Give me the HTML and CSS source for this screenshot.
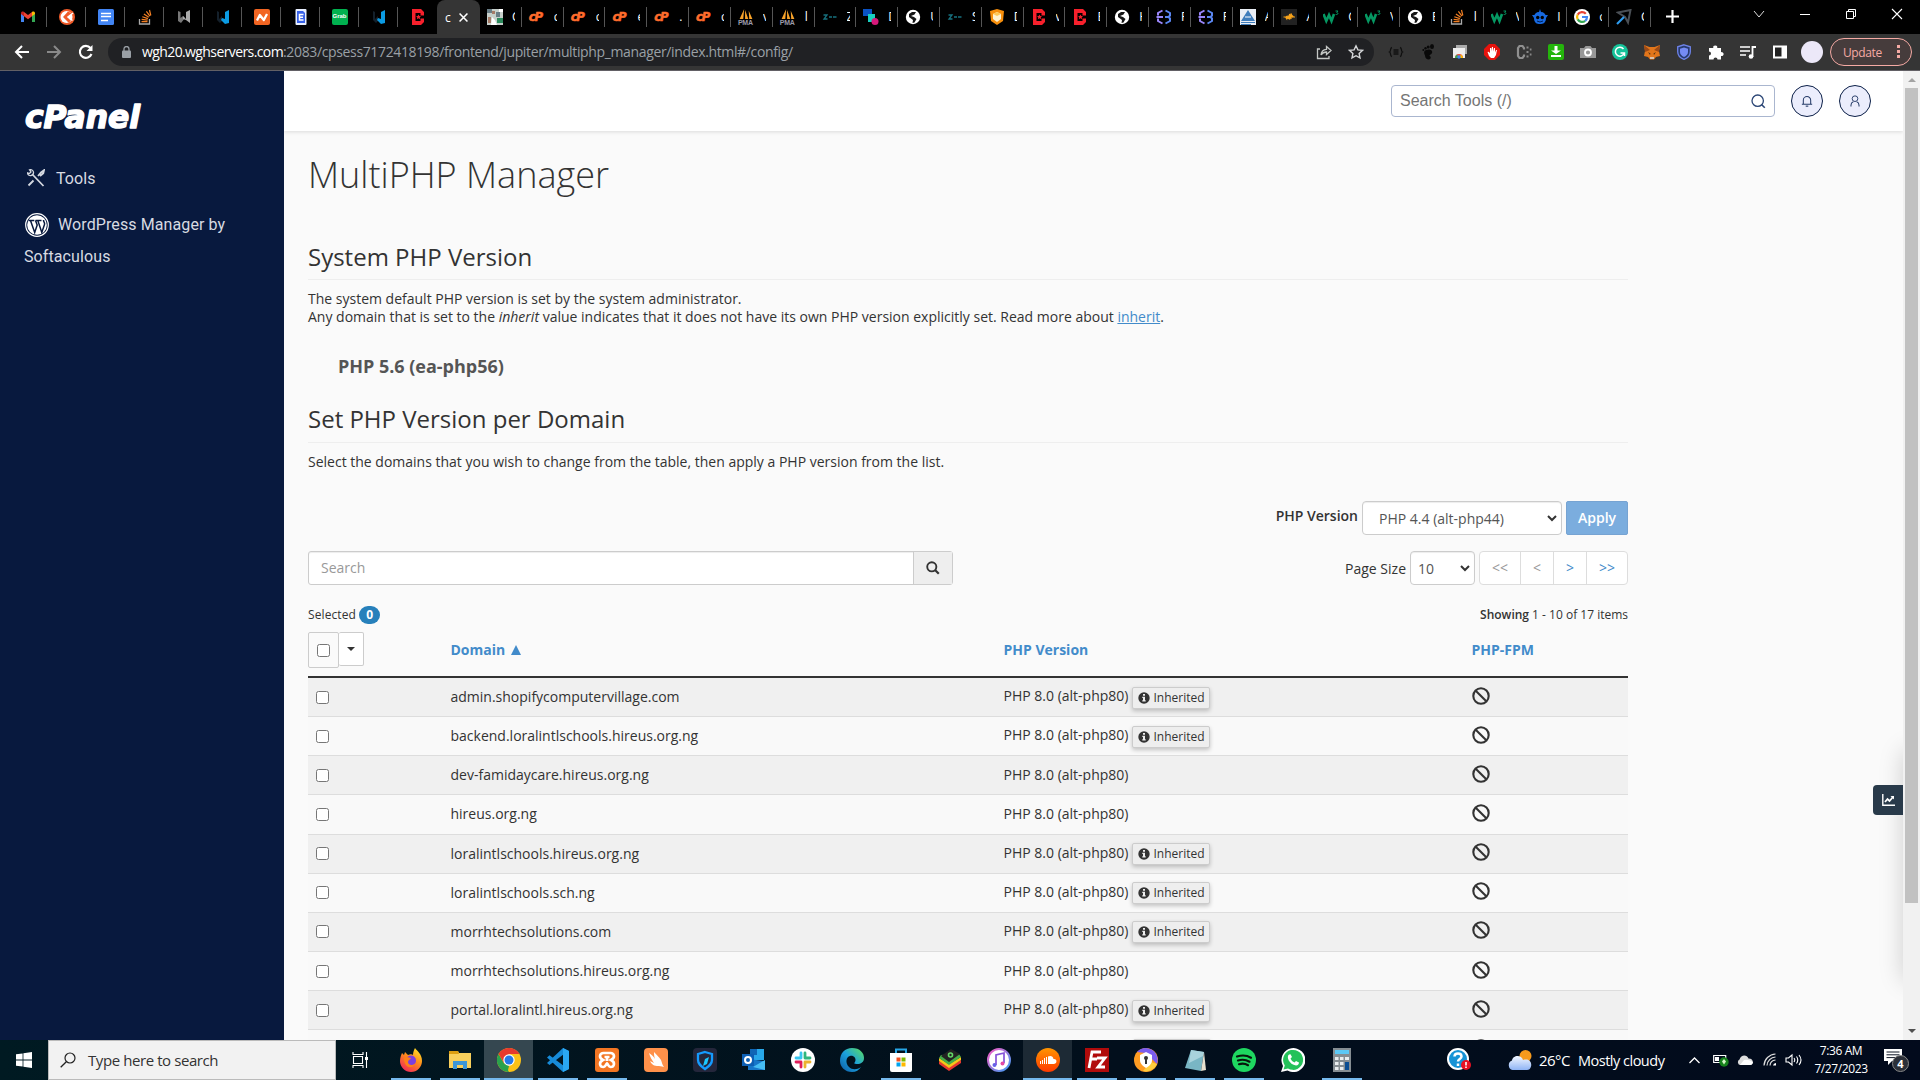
FILE: index.html
```html
<!DOCTYPE html>
<html lang="en">
<head>
<meta charset="utf-8">
<title>cPanel - MultiPHP Manager</title>
<link rel="stylesheet" href="styles.css">
</head>
<body>
<svg class="defs" width="0" height="0" aria-hidden="true">
  <defs>
    <linearGradient id="g-ff" x1="0.8" y1="0" x2="0.2" y2="1"><stop offset="0" stop-color="#ffe226"/><stop offset=".45" stop-color="#ff8a1c"/><stop offset="1" stop-color="#f0245c"/></linearGradient>
    <linearGradient id="g-edge" x1="0" y1="1" x2="1" y2="0"><stop offset="0" stop-color="#0c59a4"/><stop offset=".5" stop-color="#1ba1dd"/><stop offset="1" stop-color="#5fe05a"/></linearGradient>
    <linearGradient id="g-sc" x1="0" y1="0" x2="0" y2="1"><stop offset="0" stop-color="#ff9500"/><stop offset="1" stop-color="#ff3a00"/></linearGradient>
    <linearGradient id="g-it" x1="0" y1="0" x2="1" y2="1"><stop offset="0" stop-color="#fb5bc5"/><stop offset="1" stop-color="#3a9ef5"/></linearGradient>
    <linearGradient id="g-cl" x1="0" y1="0" x2="0" y2="1"><stop offset="0" stop-color="#f4f8ff"/><stop offset="1" stop-color="#8fb4f5"/></linearGradient>
  </defs>
  <symbol id="i-gmail" viewBox="0 0 16 16"><path d="M1 4v9h3V7z" fill="#4285f4"/><path d="M15 4v9h-3V7z" fill="#34a853"/><path d="M1 4.2C1 2.600 2.800 2 4 3v4.200L1 5z" fill="#c5221f"/><path d="M4 3l4 3 4-3v4.200L8 10.300 4 7.200z" fill="#ea4335"/><path d="M12 3c1.200-1 3-.4 3 1.200V5l-3 2.200z" fill="#fbbc04"/></symbol>
  <symbol id="i-kite" viewBox="0 0 16 16"><circle cx="8" cy="8" r="8" fill="#f05a28"/><circle cx="7.500" cy="8" r="6" fill="#fff"/><path d="M9 2.500L4 8l5.500 5.500L12 12 8.500 8 13 4.500z" fill="#f05a28"/><path d="M14 4L9 8l4.500 3.500" stroke="#fff" stroke-width="1.500" fill="none"/></symbol>
  <symbol id="i-docs" viewBox="0 0 16 16"><rect width="16" height="16" rx="1.500" fill="#4285f4"/><path d="M3 4.500h10M3 7.500h10M3 11.500h7" stroke="#fff" stroke-width="1.500"/></symbol>
  <symbol id="i-so" viewBox="0 0 16 16"><path d="M2.500 10v5h10v-5" fill="none" stroke="#aaa" stroke-width="1.300"/><path d="M4.500 12.700h6M4.600 10.400l6 .7M5.300 7.700l5.600 1.900M6.900 4.900l4.900 3.400M9.400 2.300l3.500 4.800M12.500 1l1.300 5.500" stroke="#f48024" stroke-width="1.200"/></symbol>
  <symbol id="i-wg" viewBox="0 0 16 16"><path d="M2 2l2.500 1v6L7 7l2 2-4 5-3-2z" fill="#777"/><path d="M7 7l3 3V3l4-2v13l-4-3-3-1z" fill="#aaa"/></symbol>
  <symbol id="i-wb" viewBox="0 0 16 16"><path d="M2 2l2 1v7l3-3v5l-2 2-3-3z" fill="#14202b"/><path d="M7 9l3 1V3l4-2v13l-4 1-4-4z" fill="#0b9be3"/></symbol>
  <symbol id="i-n" viewBox="0 0 16 16"><rect width="16" height="16" rx="2" fill="#f26522"/><path d="M3 11.500L5.800 6l4 5L13 5" fill="none" stroke="#fff" stroke-width="2.300" stroke-linejoin="round"/></symbol>
  <symbol id="i-edoc" viewBox="0 0 16 16"><rect x="2.500" width="11" height="16" rx="1" fill="#e8efff"/><path d="M4 2h6l2 2v10H4z" fill="#3761e8"/><path d="M10.500 5.500H6.500v5.500h4M6.500 8.200H10" stroke="#fff" stroke-width="1.500" fill="none"/></symbol>
  <symbol id="i-red" viewBox="0 0 16 16"><path d="M2 0h9l3 3v3.500h-3.500V4H5.500v8h5V9.500H14V13l-3 3H2z" fill="#f7202c"/><path d="M8.500 5.500l.8 1.600 1.700.2-1.300 1.100.4 1.800-1.600-.9-1.600.9.4-1.800L6 7.300l1.700-.2z" fill="#f7202c"/></symbol>
  <symbol id="i-photo" viewBox="0 0 16 16"><rect width="16" height="16" fill="#c6cfca"/><path d="M0 0h5v4H0zM9 3h4v5H9z" fill="#697d86"/><path d="M5 2h3v3H5zM1 8h3v6H1z" fill="#a57b67"/><path d="M10 9h6v5h-6z" fill="#2c8b5d"/><path d="M5 8l3 3 2 5H4zM12 0h4v3h-4z" fill="#fff"/></symbol>
  <symbol id="i-z" viewBox="0 0 16 16"><path d="M1.500 6h3.500L2 10h3.500M7 8h3M11 8h3.500" stroke="#17717f" stroke-width="1.300" fill="none"/></symbol>
  <symbol id="i-col" viewBox="0 0 16 16"><path d="M0 0h9v7H0z" fill="#0a52c4"/><path d="M5 5h7v8H5z" fill="#18cfc0"/><circle cx="12" cy="12.500" r="3.500" fill="#d6187a"/></symbol>
  <symbol id="i-globe" viewBox="0 0 16 16"><circle cx="8" cy="8" r="7.200" fill="#fff"/><path d="M4 5l3-2h4l-1.500 2.500L6 7l3 1 2.500 2-2 3.500-2 .5.5-3L4 8z" fill="#161616"/></symbol>
  <symbol id="i-hex" viewBox="0 0 16 16"><path d="M8 0l7 2-1 10-6 4-6-4L1 2z" fill="#f78f0c"/><path d="M8 3l4 2v5l-4 3-4-3V5z" fill="#fff2d0"/><path d="M4 5l4 2 4-2-4-2z" fill="#ffc857"/></symbol>
  <symbol id="i-e3" viewBox="0 0 16 16"><path d="M6.500 1.500L2 4v2.500M2 9.500V12l4.500 2.500M.5 8H7" fill="none" stroke="#9a86fa" stroke-width="2"/><path d="M9.500 1.500L14 4v2.500L12.500 8 14 9.500V12l-4.500 2.500M9 8h4" fill="none" stroke="#5a86f0" stroke-width="2"/></symbol>
  <symbol id="i-tri" viewBox="0 0 16 16"><path d="M0 0h16v16H0z" fill="#e9eef5"/><path d="M8 1l7 11H1zM1 13h14v1H1zM1 15h10v1H1z" fill="#3f7dbb"/><path d="M5 8h6" stroke="#fff"/></symbol>
  <symbol id="i-wave" viewBox="0 0 16 16"><rect width="16" height="16" fill="#222"/><path d="M2.500 8h2l1 1.500V7l1.500 3V6.500l1.500 4V5l1.500 5V4.500l1.500 4V7l1 1h1.500" fill="none" stroke="#f6a21a" stroke-width="1.200"/></symbol>
  <symbol id="i-w3" viewBox="0 0 16 16"><path d="M.5 5l2.800 7L6 6l2.500 6L11 5" fill="none" stroke="#059862" stroke-width="2.600"/><path d="M12.500 2h2.500l-1.300 1.500c2 .3 1.500 2.500-1 2" fill="none" stroke="#059862"/></symbol>
  <symbol id="i-robot" viewBox="0 0 16 16"><path d="M8 0l1 3c3 0 4 2 4.500 3H16l-2 3c0 5-3 6-6 6s-6-1-6-6L0 6h2.500C3 5 4 3 7 3z" fill="#1769e0"/><circle cx="5.700" cy="8.500" r="1.700"/><circle cx="10.300" cy="8.500" r="1.700"/><path d="M5 12q3 2 6 0" stroke="#001f57" fill="none"/></symbol>
  <symbol id="i-google" viewBox="0 0 16 16"><circle cx="8" cy="8" r="8" fill="#fff"/><g fill="none" stroke-width="2.200"><path d="M11.800 4.800A5 5 0 0 0 3.700 5.600" stroke="#ea4335"/><path d="M3.700 5.600a5 5 0 0 0 0 4.800" stroke="#fbbc05"/><path d="M3.700 10.400a5 5 0 0 0 7.500 1.400" stroke="#34a853"/><path d="M11.200 11.800A5 5 0 0 0 13 8H8" stroke="#4285f4"/></g></symbol>
  <symbol id="i-arrow" viewBox="0 0 16 16"><path d="M2 3.500L14.500 1 12 13.500 9 8z" fill="none" stroke="#4a4f55" stroke-width="2"/><path d="M1 15l7-7" stroke="#2d9cf0" stroke-width="2.200"/></symbol>
  <symbol id="i-sails" viewBox="0 0 16 12"><path d="M6 0L1 11h4zM7 1v10h3.500zM11 2l.5 9H15z" fill="#f8a32a"/></symbol>
  <symbol id="i-win" viewBox="0 0 16 16"><path d="M0 2.300l6.600-.9v6.200H0zM7.400 1.300L16 0v7.600H7.400zM0 8.400h6.600v6.200L0 13.700zM7.400 8.400H16V16l-8.600-1.300z" fill="#fff"/></symbol>
  <symbol id="i-ban" viewBox="0 0 18 18"><circle cx="9" cy="9" r="7.700" fill="none" stroke="#333" stroke-width="2.100"/><path d="M3.700 3.700l10.600 10.600" stroke="#333" stroke-width="2.100"/></symbol>
  <symbol id="i-info" viewBox="0 0 12 12"><circle cx="6" cy="6" r="5.700" fill="#333"/><path d="M5 2h2v1.700H5zM4.300 4.700H7v3.600h.7v1.200H4.300V8.300H5V5.900h-.7z" fill="#eee"/></symbol>
</svg>

<div class="screen">
  <header class="tabstrip">
    <div class="pinned">
      <span class="pin"><svg><use href="#i-gmail"/></svg></span>
      <span class="pin"><svg><use href="#i-kite"/></svg></span>
      <span class="pin"><svg><use href="#i-docs"/></svg></span>
      <span class="pin"><svg><use href="#i-so"/></svg></span>
      <span class="pin"><svg><use href="#i-wg"/></svg></span>
      <span class="pin"><svg><use href="#i-wb"/></svg></span>
      <span class="pin"><svg><use href="#i-n"/></svg></span>
      <span class="pin"><svg><use href="#i-edoc"/></svg></span>
      <span class="pin"><b class="grab">Grab</b></span>
      <span class="pin"><svg><use href="#i-wb"/></svg></span>
      <span class="pin last"><svg><use href="#i-red"/></svg></span>
    </div>
    <div class="tab-active"><b>c</b><svg viewBox="0 0 8 8"><path d="M.5.5l7 7M7.500.5l-7 7" stroke="#fff" stroke-width="1.400"/></svg></div>
    <div class="tabs">
      <span class="tab"><svg><use href="#i-photo"/></svg><i>C</i></span>
      <span class="tab"><b class="cp">cP</b><i>c</i></span>
      <span class="tab"><b class="cp">cP</b><i>c</i></span>
      <span class="tab"><b class="cp">cP</b><i>e</i></span>
      <span class="tab"><b class="cp">cP</b><i>.</i></span>
      <span class="tab"><b class="cp">cP</b><i>c</i></span>
      <span class="tab"><b class="pma"><svg><use href="#i-sails"/></svg>PMA</b><i>v</i></span>
      <span class="tab"><b class="pma"><svg><use href="#i-sails"/></svg>PMA</b><i>l</i></span>
      <span class="tab"><svg><use href="#i-z"/></svg><i>Z</i></span>
      <span class="tab"><svg><use href="#i-col"/></svg><i>D</i></span>
      <span class="tab"><svg><use href="#i-globe"/></svg><i>U</i></span>
      <span class="tab"><svg><use href="#i-z"/></svg><i>S</i></span>
      <span class="tab"><svg><use href="#i-hex"/></svg><i>D</i></span>
      <span class="tab"><svg><use href="#i-red"/></svg><i>v</i></span>
      <span class="tab"><svg><use href="#i-red"/></svg><i>E</i></span>
      <span class="tab"><svg><use href="#i-globe"/></svg><i>H</i></span>
      <span class="tab"><svg><use href="#i-e3"/></svg><i>F</i></span>
      <span class="tab"><svg><use href="#i-e3"/></svg><i>F</i></span>
      <span class="tab"><svg><use href="#i-tri"/></svg><i>A</i></span>
      <span class="tab"><svg><use href="#i-wave"/></svg><i>A</i></span>
      <span class="tab"><svg><use href="#i-w3"/></svg><i>C</i></span>
      <span class="tab"><svg><use href="#i-w3"/></svg><i>V</i></span>
      <span class="tab"><svg><use href="#i-globe"/></svg><i>E</i></span>
      <span class="tab"><svg><use href="#i-so"/></svg><i>l</i></span>
      <span class="tab"><svg><use href="#i-w3"/></svg><i>V</i></span>
      <span class="tab"><svg><use href="#i-robot"/></svg><i>I</i></span>
      <span class="tab"><svg><use href="#i-google"/></svg><i>c</i></span>
      <span class="tab"><svg><use href="#i-arrow"/></svg><i>C</i></span>
    </div>
    <svg class="plus" viewBox="0 0 12 12"><path d="M6 0v12M0 6h12" stroke="#fff" stroke-width="2"/></svg>
    <div class="winctl">
      <svg viewBox="0 0 12 12"><path d="M1 3l5 6 5-6" fill="none" stroke="#ddd"/></svg>
      <svg viewBox="0 0 12 12"><path d="M1 6.500h10" stroke="#fff"/></svg>
      <svg viewBox="0 0 12 12"><path d="M1.500 3.500h7v7h-7zM3.500 3.500v-2h7v7h-2" fill="none" stroke="#fff"/></svg>
      <svg viewBox="0 0 12 12"><path d="M1 1l10 10M11 1L1 11" stroke="#fff" stroke-width="1.100"/></svg>
    </div>
  </header>

  <div class="toolbar">
    <svg class="nav" viewBox="0 0 16 16"><path d="M15 8H2M8 2L2 8l6 6" fill="none" stroke="#fff" stroke-width="2"/></svg>
    <svg class="nav" viewBox="0 0 16 16"><path d="M1 8h13M8 2l6 6-6 6" fill="none" stroke="#8a8a8a" stroke-width="2"/></svg>
    <svg class="nav" viewBox="0 0 16 16"><path d="M13.500 10A6 6 0 1 1 12.500 4" fill="none" stroke="#fff" stroke-width="2.100"/><path d="M14.500 1v6h-6z" fill="#fff"/></svg>
    <div class="omnibox">
      <svg class="lock" viewBox="0 0 9 12"><rect y="4.500" width="9" height="7.500" rx="1" fill="#9aa0a6"/><path d="M2 5V3a2.500 2.500 0 0 1 5 0v2" fill="none" stroke="#9aa0a6" stroke-width="1.300"/></svg>
      <span class="url"><b>wgh20.wghservers.com</b><span>:2083/cpsess7172418198/frontend/jupiter/multiphp_manager/index.html#/config/</span></span>
      <svg class="act" viewBox="0 0 16 16"><path d="M4 5H1.500v9.500H13V12M5 11c.3-4 2.500-5.500 5.500-5.700V2.500l4.500 4-4.500 4V8C8 8 6.300 9 5 11z" fill="none" stroke="#c4c7c5" stroke-width="1.300"/></svg>
      <svg class="act" viewBox="0 0 16 16"><path d="M8 1.800l1.900 4.100 4.500.5-3.300 3 .9 4.500L8 11.700l-4 2.200.9-4.500-3.300-3 4.500-.5z" fill="none" stroke="#d5d7d9" stroke-width="1.400"/></svg>
    </div>
    <div class="ext">
      <span><svg viewBox="0 0 16 16"><path d="M4 3.500C1.500 4 3.500 7 1.500 8c2 1 0 4 2.500 4.500M12 3.500C14.500 4 12.500 7 14.500 8c-2 1 0 4-2.500 4.500M5.500 6h5M5.500 8h5M5.500 10h5" fill="none" stroke="#101010" stroke-width="1.300"/></svg></span>
      <span><svg viewBox="0 0 16 16" fill="#090909"><path d="M6 6c4-1.500 7 0 6 3-.6 1.500-2.500 1.500-2.500 3 1 .2 1.500 1 1 2.500C9 17 5 15 5 11.500 3.500 9 4 6.800 6 6z"/><ellipse cx="12" cy="2.500" rx="2" ry="2.500"/><circle cx="8.200" cy="3" r="1.500"/><circle cx="5.500" cy="4.200" r="1.200"/><circle cx="3.300" cy="6" r="1"/></svg></span>
      <span><svg viewBox="0 0 16 16"><path d="M4 1h11v9H4z" fill="#aaa"/><path d="M1 4h12v10H1z" fill="#eee"/><path d="M3 14a4 4 0 0 1 8 0z" fill="#ea4335"/><path d="M3 14a4 4 0 0 1 2-3.400L7 14z" fill="#34a853"/><path d="M11 14a4 4 0 0 0-2-3.400L7 14z" fill="#fbbc05"/><circle cx="7" cy="13" r="1.700" fill="#4285f4"/></svg></span>
      <span><svg viewBox="0 0 16 16"><path d="M5 0h6l5 5v6l-5 5H5l-5-5V5z" fill="#e8130d"/><path d="M5 12L3.500 8l1-.3L6 9V4h1.200v3.500L8 3h1v4.500L10 4h1v4.500L12 6h1l-1 5-2 3H7z" fill="#fff"/></svg></span>
      <span><svg viewBox="0 0 16 16"><path d="M8 5.500V4.200L6.500 2h-3L2 4.200v7.600L3.500 14h3L8 11.800v-1.300" fill="none" stroke="#909090" stroke-width="2.200"/><path d="M10.500 2.500h2v2h-2zM10.500 7h2v2h-2zM10.500 11.500h2v2h-2zM13.800 4.500h1.700v2h-1.700zM13.800 9.500h1.700v2h-1.700z" fill="#888"/></svg></span>
      <span><svg viewBox="0 0 16 16"><rect width="16" height="16" rx="2" fill="#24b50b"/><path d="M6.500 2h3v4.500H13L8 10 3 6.500h3.500z" fill="#fff"/><path d="M3 12h10" stroke="#fff" stroke-width="2"/></svg></span>
      <span><svg viewBox="0 0 16 16"><path d="M0 4h4l1.500-2h5L12 4h4v10H0z" fill="#989898"/><circle cx="8" cy="8.500" r="3" fill="none" stroke="#fff" stroke-width="1.800"/></svg></span>
      <span><svg viewBox="0 0 16 16"><circle cx="8" cy="8" r="8" fill="#15c39a"/><path d="M11.500 5A4.500 4.500 0 1 0 12 9.500M8.500 9h4v3" fill="none" stroke="#fff" stroke-width="1.500"/></svg></span>
      <span><svg viewBox="0 0 16 16"><path d="M0 1l5.500 2h5L16 1l-1 6 1 5-4 1-2 2.500H6L4 13l-4-1 1-5z" fill="#e2761b"/><path d="M0 1l6 5-5 2zM16 1l-6 5 5 2z" fill="#9b4a17"/><path d="M4 8l2.500 1.500L6 11zM12 8L9.500 9.500 10 11z" fill="#513014"/><path d="M6 13h4v2H6z" fill="#d8c0ad"/></svg></span>
      <span><svg viewBox="0 0 16 16"><path d="M8 .8l6.300 2v5c0 4-3 6.400-6.300 7.600C4.700 14.200 1.700 11.800 1.700 7.800v-5z" fill="#273a6e" stroke="#6e83e8" stroke-width="1.300"/><path d="M8 3.500l4 1.300V8c0 2.500-2 4-4 5-2-1-4-2.500-4-5V4.800z" fill="#758bf5"/></svg></span>
      <span><svg viewBox="0 0 16 16"><path d="M1 4h4.300a2 2 0 1 1 3.900 0H13v4.200a2 2 0 1 1 0 3.800v3.500H9.500a2 2 0 1 0-4 0H1v-4a2 2 0 1 0 0-4z" fill="#fff"/></svg></span>
      <span><svg viewBox="0 0 16 16"><path d="M0 3h10M0 7h10M0 11h6" stroke="#fff" stroke-width="1.700"/><path d="M12.500 13V3H16" stroke="#fff" stroke-width="1.800" fill="none"/><circle cx="11" cy="12.500" r="2.300" fill="#fff"/></svg></span>
      <span><svg viewBox="0 0 16 16"><path d="M1 1.500h14v13H1z" fill="#fff"/><path d="M3 3.500h6.500v9H3z" fill="#222"/></svg></span>
      <span><i class="avatar"></i></span>
    </div>
    <div class="update"><span>Update</span><svg viewBox="0 0 4 14"><path d="M0 0h3v3H0zM0 5h3v3H0zM0 10h3v3H0z" fill="#f5aaa4"/></svg></div>
  </div>

  <div class="page">
    <aside class="sidebar">
      <svg class="logo" viewBox="0 0 118 27"><text x="1" y="25" textLength="115" lengthAdjust="spacingAndGlyphs">cPanel</text></svg>
      <p class="navitem tools"><svg viewBox="0 0 18 18"><path d="M5 5l11.500 12M1.500 16.500l5-5M11 7l3-3.500L17 1.200l-.7 3L13 7" stroke="#d3d7df" stroke-width="1.800" fill="none"/><path d="M2.500.8a3 3 0 1 1-2 3l2 .7L4 3z" fill="none" stroke="#d3d7df" stroke-width="1.300"/></svg>Tools</p>
      <p class="navitem wp"><svg viewBox="0 0 24 24"><circle cx="12" cy="12" r="11.300" fill="none" stroke="#fff" stroke-width="1.200"/><circle cx="12" cy="12" r="9.800" fill="#fff"/><path d="M3.500 7.500h5.800M10.500 7.500h6M5.500 7.500l4.200 12 2.500-7.500-1.700-4.500M12.800 7.500l4 12 2.700-8c.7-2-1.200-2.500-1-4.500" stroke="#08193e" stroke-width="1.500" fill="none"/></svg>WordPress Manager by Softaculous</p>
    </aside>

    <main class="main">
      <div class="topbar">
        <div class="toolsearch"><span>Search Tools (/)</span><svg viewBox="0 0 15 15"><circle cx="6.700" cy="6.700" r="5.700" fill="none" stroke="#2a4575" stroke-width="1.300"/><path d="M10.500 10.500l3.300 3.300" stroke="#2a4575" stroke-width="1.600"/></svg></div>
        <span class="round"><svg viewBox="0 0 14 14"><path d="M1 10.700h12M2.700 10.500V6a4.300 4.300 0 0 1 8.600 0v4.500" fill="none" stroke="#263c68" stroke-width="1.200"/><path d="M5.500 13h3" stroke="#263c68" stroke-width="1.300"/></svg></span>
        <span class="round"><svg viewBox="0 0 14 14"><circle cx="7" cy="4.300" r="3.300" fill="none" stroke="#263c68" stroke-width="1.100"/><path d="M2.300 13.500V12q0-3 2.700-4M11.700 13.500V12q0-3-2.700-4" fill="none" stroke="#263c68" stroke-width="1.200"/></svg></span>
      </div>

      <div class="content">
        <h1>MultiPHP Manager</h1>
        <h2>System PHP Version</h2>
        <p class="desc">The system default PHP version is set by the system administrator.<br>Any domain that is set to the <em>inherit</em> value indicates that it does not have its own PHP version explicitly set. Read more about <a>inherit</a>.</p>
        <p class="current">PHP 5.6 (ea-php56)</p>
        <h2 class="second">Set PHP Version per Domain</h2>
        <p class="desc">Select the domains that you wish to change from the table, then apply a PHP version from the list.</p>

        <div class="applyrow">
          <strong>PHP Version</strong>
          <div class="select ver"><span>PHP 4.4 (alt-php44)</span><svg viewBox="0 0 10 7"><path d="M1 1l4 4 4-4" fill="none" stroke="#333" stroke-width="2"/></svg></div>
          <button class="apply">Apply</button>
        </div>

        <div class="filterrow">
          <div class="search"><span>Search</span><b><svg viewBox="0 0 15 15"><circle cx="6.200" cy="6.200" r="4.900" fill="none" stroke="#333" stroke-width="2"/><path d="M9.700 9.700l4 4" stroke="#333" stroke-width="2.400"/></svg></b></div>
          <div class="paging">
            <span>Page Size</span>
            <div class="select size"><span>10</span><svg viewBox="0 0 10 7"><path d="M1 1l4 4 4-4" fill="none" stroke="#333" stroke-width="2"/></svg></div>
            <div class="pager"><i class="off w">&lt;&lt;</i><i class="off">&lt;</i><i>&gt;</i><i class="w">&gt;&gt;</i></div>
          </div>
        </div>

        <div class="inforow"><span class="sel">Selected <b class="count">0</b></span><span><strong>Showing</strong> 1 - 10 of 17 items</span></div>

        <div class="grid thead">
          <div class="checkdrop"><span class="cbx"><i class="check"></i></span><span class="drop"><i class="caret"></i></span></div>
          <b>Domain <i class="up"></i></b><b>PHP Version</b><b>PHP-FPM</b>
        </div>
        <div class="rows">
          <div class="grid row"><i class="check"></i><span>admin.shopifycomputervillage.com</span><span class="v inh">PHP 8.0 (alt-php80)<em class="tag"><svg><use href="#i-info"/></svg>Inherited</em></span><svg class="ban"><use href="#i-ban"/></svg></div>
          <div class="grid row"><i class="check"></i><span>backend.loralintlschools.hireus.org.ng</span><span class="v inh">PHP 8.0 (alt-php80)<em class="tag"><svg><use href="#i-info"/></svg>Inherited</em></span><svg class="ban"><use href="#i-ban"/></svg></div>
          <div class="grid row"><i class="check"></i><span>dev-famidaycare.hireus.org.ng</span><span class="v">PHP 8.0 (alt-php80)</span><svg class="ban"><use href="#i-ban"/></svg></div>
          <div class="grid row"><i class="check"></i><span>hireus.org.ng</span><span class="v">PHP 8.0 (alt-php80)</span><svg class="ban"><use href="#i-ban"/></svg></div>
          <div class="grid row"><i class="check"></i><span>loralintlschools.hireus.org.ng</span><span class="v inh">PHP 8.0 (alt-php80)<em class="tag"><svg><use href="#i-info"/></svg>Inherited</em></span><svg class="ban"><use href="#i-ban"/></svg></div>
          <div class="grid row"><i class="check"></i><span>loralintlschools.sch.ng</span><span class="v inh">PHP 8.0 (alt-php80)<em class="tag"><svg><use href="#i-info"/></svg>Inherited</em></span><svg class="ban"><use href="#i-ban"/></svg></div>
          <div class="grid row"><i class="check"></i><span>morrhtechsolutions.com</span><span class="v inh">PHP 8.0 (alt-php80)<em class="tag"><svg><use href="#i-info"/></svg>Inherited</em></span><svg class="ban"><use href="#i-ban"/></svg></div>
          <div class="grid row"><i class="check"></i><span>morrhtechsolutions.hireus.org.ng</span><span class="v">PHP 8.0 (alt-php80)</span><svg class="ban"><use href="#i-ban"/></svg></div>
          <div class="grid row"><i class="check"></i><span>portal.loralintl.hireus.org.ng</span><span class="v inh">PHP 8.0 (alt-php80)<em class="tag"><svg><use href="#i-info"/></svg>Inherited</em></span><svg class="ban"><use href="#i-ban"/></svg></div>
          <div class="grid row"><span></span><span></span><span class="v inh"><em class="tag only"></em></span><svg class="ban"><use href="#i-ban"/></svg></div>
        </div>
      </div>
      <div class="edgeclip"><div class="edgeshade"></div></div>
      <div class="stats"><svg viewBox="0 0 13 12"><path d="M.8 0v11.200H13" fill="none" stroke="#fff" stroke-width="1.400"/><path d="M3 8l2.500-3 2 2L11 3" fill="none" stroke="#fff" stroke-width="1.800"/><path d="M8.500 2H12v3.500z" fill="#fff"/></svg></div>
    </main>

    <div class="scrollbar"><i class="arr top"></i><i class="thumb"></i><i class="arr down"></i></div>
  </div>

  <footer class="taskbar">
    <div class="start"><svg width="16" height="16"><use href="#i-win"/></svg></div>
    <div class="winsearch"><svg viewBox="0 0 16 16"><circle cx="10" cy="6" r="5" fill="none" stroke="#222" stroke-width="1.200"/><path d="M6.300 9.700L.7 15.300" stroke="#222" stroke-width="1.300"/></svg><span>Type here to search</span></div>
    <div class="taskview"><svg viewBox="0 0 17 16"><path d="M1 0v2.500h10V0M1.500 4.500h9v7h-9zM1 16v-2.500h10V16M14.500 0v16" fill="none" stroke="#fff" stroke-width="1.100"/><path d="M13 5h3v3h-3z" fill="#fff"/></svg></div>
    <div class="apps">
      <span class="app run"><svg viewBox="0 0 24 24"><path d="M3 5l2 2 1-3 3 3c2-1 4-1 5 0 0-3 1-5 2-7 2 3 7 6 7 13a11 11 0 1 1-22 0c0-3 1-6 2-8z" fill="url(#g-ff)"/><circle cx="12" cy="12.500" r="5" fill="#7c3fe0"/><path d="M5 10c3-2 5 0 7 0-1 2-3 2-3 4 0 3 4 4 7 2-2 5-11 5-11-6z" fill="#ff8019"/></svg></span>
      <span class="app run"><svg viewBox="0 0 24 24"><path d="M1 3h9l1 2h12v15H1z" fill="#f8cf5c"/><path d="M1 3h9l1 3H1z" fill="#dc9e12"/><path d="M5 21v-8h14v8h-4v-4H9v4z" fill="#3c96d8"/></svg></span>
      <span class="app full"><svg viewBox="0 0 24 24"><circle cx="12" cy="12" r="12" fill="#fbc116"/><path d="M1.600 6A12 12 0 0 1 22.400 6H12z" fill="#e53a2e"/><path d="M1.600 6l5.200 9L12 24A12 12 0 0 1 1.600 6z" fill="#2aa24c"/><path d="M1.600 6h10.400l-5 9z" fill="#e53a2e"/><path d="M6.800 15l5.200 3-1.500 6z" fill="#2aa24c"/><circle cx="12" cy="12" r="5.700" fill="#fff"/><circle cx="12" cy="12" r="4.500" fill="#2479e6"/></svg></span>
      <span class="app run"><svg viewBox="0 0 24 24"><path d="M17 0l6 3v18l-6 3L1 9.500l2.500-2.300L18 18V6L3.500 17 1 15z" fill="#178bd8"/><path d="M17 0l6 3v18l-6 3z" fill="#2aa7f2"/></svg></span>
      <span class="app run"><svg viewBox="0 0 24 24"><rect width="24" height="24" rx="3" fill="#f37623"/><path d="M8 12C3 9.500 5 5 8.500 5h7C19 5 21 9.500 16 12c5 2.500 3 7-.5 7-2 0-2-2-3.500-3.500C10.500 17 10.500 19 8.500 19 5 19 3 14.500 8 12zM9.500 9h5M12 9v4" fill="none" stroke="#fff" stroke-width="2.600"/></svg></span>
      <span class="app"><svg viewBox="0 0 24 24"><rect width="24" height="24" rx="4" fill="#ff914a"/><path d="M5 5c3 2 5 4 6 6-1-3-1-5-1-7 2 2 5 5 7 8 1 2 1 5 3 7-3-1-4-1-7-1-4 0-6-3-7-5l4 2C8 12 6 9 5 5z" fill="#fff"/></svg></span>
      <span class="app"><svg viewBox="0 0 24 24"><rect width="24" height="24" rx="4" fill="#24263b"/><path d="M12 4l7 2v6c0 4-3 6-7 9-4-3-7-5-7-9V6z" fill="none" stroke="#159bff" stroke-width="2.300"/><path d="M10 18l2-7 4-2-2 7z" fill="#1cc8ff"/></svg></span>
      <span class="app"><svg viewBox="0 0 24 24"><path d="M8 1h14v11H8z" fill="#28a8ea"/><path d="M8 1h7v6H8z" fill="#1066b5"/><path d="M6 11l17 2v9H6z" fill="#1676c9"/><path d="M23 12l-12 7 12 3z" fill="#46bdf4"/><path d="M0 6h12v12H0z" fill="#0d5fb4"/><circle cx="6" cy="12" r="3" fill="none" stroke="#fff" stroke-width="2"/></svg></span>
      <span class="app"><svg viewBox="0 0 24 24"><circle cx="12" cy="12" r="12" fill="#fff"/><g stroke-width="2.800" stroke-linecap="round"><path d="M10 5v5M5 10h5" stroke="#36c5f0"/><path d="M14 5v5M14 10h5" stroke="#2eb67d"/><path d="M14 14v5M14 14h5" stroke="#ecb22e"/><path d="M10 14v5M5 14h5" stroke="#e01e5a"/></g></svg></span>
      <span class="app"><svg viewBox="0 0 24 24"><path d="M0 13C0 5 5 0 12 0c8 0 12 5 12 10 0 4-3 6-7 6-3 0-3-1-2-2 2-4-2-7-5-6-4 1-5 7-1 11 3 3 8 3 12 0-2 3-5 5-9 5C5 24 0 19 0 13z" fill="url(#g-edge)"/></svg></span>
      <span class="app run"><svg viewBox="0 0 24 24"><path d="M7 6V1.500h10V6" fill="none" stroke="#27a7e8" stroke-width="2"/><path d="M1 5h22v17q0 2-2 2H3q-2 0-2-2z" fill="#fff"/><path d="M7.500 9.500h4v4h-4z" fill="#f25022"/><path d="M12.500 9.500h4v4h-4z" fill="#7fba00"/><path d="M7.500 14.500h4v4h-4z" fill="#00a4ef"/><path d="M12.500 14.500h4v4h-4z" fill="#ffb900"/></svg></span>
      <span class="app"><svg viewBox="0 0 24 24"><path d="M1 16l10 7 12-8v-3L11 19 1 13z" fill="#e8362f"/><path d="M1 13l10 7 12-8V9L11 16 1 10z" fill="#f7c61a"/><path d="M1 10l10 7 12-8-2-3L3 7z" fill="#47ad46"/><path d="M3 8l10-7 9 5-11 8z" fill="#222"/><circle cx="12.500" cy="7" r="2.800" fill="#64d867"/><circle cx="12.500" cy="7" r="1.200" fill="#222"/></svg></span>
      <span class="app"><svg viewBox="0 0 24 24"><circle cx="12" cy="12" r="11" fill="#fff" stroke="url(#g-it)" stroke-width="2"/><path d="M9 17V7l8-2v10" fill="none" stroke="#8653d9" stroke-width="1.700"/><circle cx="7.500" cy="17" r="2" fill="#6661e8"/><circle cx="15.500" cy="15.500" r="2" fill="#e249a5"/></svg></span>
      <span class="app full soft"><svg viewBox="0 0 24 24"><circle cx="12" cy="12" r="12" fill="url(#g-sc)"/><path d="M12 16V8.500c3-1.500 5 0 5.500 2.500 4-.5 4 5 0 5zM10 9h1v7h-1zM8 10h1v6H8zM6 12h1v4H6zM4 13h1v3H4z" fill="#fff"/></svg></span>
      <span class="app run"><svg viewBox="0 0 24 24"><rect width="24" height="24" fill="#b10b0b"/><path d="M4 20L7 4h9M5 11h7M12 10h8l-7 9h7" fill="none" stroke="#fff" stroke-width="2.800"/></svg></span>
      <span class="app run"><svg viewBox="0 0 24 24"><circle cx="12" cy="12" r="12" fill="#ff9c22"/><path d="M12 0a12 12 0 0 1 11 16L12 5 3 4a12 12 0 0 1 9-4z" fill="#7b5cf0"/><path d="M23 16a12 12 0 0 1-14 7l8-9z" fill="#ffce3d"/><path d="M12 4l6 3v5c0 4-3 6-6 8-3-2-6-4-6-8V7z" fill="#fff"/><path d="M12 9v7" stroke="#333" stroke-width="2"/><circle cx="12" cy="10" r="2" fill="#333"/></svg></span>
      <span class="app run"><svg viewBox="0 0 24 24"><path d="M8 2l13 2-3 19-16-3z" fill="#79b6c4"/><path d="M8 2l13 2-1 4-14 7z" fill="#a9d3dc"/><path d="M21 4l2 18-5 1z" fill="#e8e0ce"/></svg></span>
      <span class="app run"><svg viewBox="0 0 24 24"><circle cx="12" cy="12" r="12" fill="#1ed760"/><path d="M5 8.500q8-2.500 14 1.200M6 12.500q6-2 11.500 1.200M7 16.200q5-1.500 9 1" fill="none" stroke="#07170c" stroke-width="2.200" stroke-linecap="round"/></svg></span>
      <span class="app"><svg viewBox="0 0 24 24"><path d="M0 24l2-6A12 12 0 1 1 6.500 22.500z" fill="#fff"/><path d="M2.500 21.500l1.300-4A10 10 0 1 1 7 20.500z" fill="#25c25a"/><path d="M8 6.500c-3 2 0 10 7 11 2 0 3-2 3-3l-3-1.500-1.500 1.500q-3-1-4-4L11 9 9.500 6.300z" fill="#fff"/></svg></span>
      <span class="app run"><svg viewBox="0 0 24 24"><rect x="3" width="18" height="24" fill="#858d92"/><path d="M5 2h14v4H5z" fill="#5cc8f5"/><path d="M5 9h3.500v3H5zM10 9h3.500v3H10zM15 9h4v3h-4zM5 14h3.500v3H5zM10 14h3.500v3H10zM5 19h3.500v3H5zM10 19h3.500v3H10z" fill="#e9edef"/><path d="M15 14h4v8h-4z" fill="#0b4d92"/></svg></span>
    </div>
    <div class="tray">
      <svg class="help" viewBox="0 0 24 24"><circle cx="11" cy="11" r="10" fill="#1793d6" stroke="#fff" stroke-width="2"/><path d="M7.500 8.500c0-4 7-4 7 0 0 2.500-3.500 2.500-3.500 5M11 15.500v2.500" fill="none" stroke="#fff" stroke-width="2.500"/><circle cx="19" cy="17" r="5" fill="#e81123"/><path d="M19 14v3.500M19 18.500v1.500" stroke="#fff" stroke-width="1.600"/></svg>
      <svg class="weather" viewBox="0 0 24 22"><circle cx="18" cy="7" r="6" fill="#f79a1c"/><path d="M5 21a5 5 0 0 1-.5-9.500C5 6 14 5 15.500 11c7-2 9 3 8 6.500q-1 3.500-4 3.500z" fill="url(#g-cl)"/></svg>
      <span class="temp">26°C</span><span class="cond">Mostly cloudy</span>
      <svg class="t chev" viewBox="0 0 12 8"><path d="M1 7l5-5 5 5" fill="none" stroke="#fff" stroke-width="1.300"/></svg>
      <svg class="t batt" viewBox="0 0 16 14"><path d="M.7 2.500h12v7H.7z" fill="none" stroke="#fff" stroke-width="1.200"/><path d="M2 4h4v4H2z" fill="#fff"/><circle cx="11" cy="9" r="4.700" fill="#16811c"/><path d="M11 6l2 2.500-2 3-2-3z" fill="#d7f4c7"/></svg>
      <svg class="t cloud" viewBox="0 0 16 10"><path d="M3 10a3 3 0 0 1-.5-5.500C4-.5 10-.5 11.500 3.500c6 0 5 6.500 1.500 6.500z" fill="#ddd"/><path d="M3 10l4-5q4-1 9 2-.5 3-3 3z" fill="#fff"/></svg>
      <svg class="t wifi" viewBox="0 0 14 14"><path d="M1 12.500A12 12 0 0 1 12.500 1M4 12.500A9 9 0 0 1 12.500 4M7 12.500A6 6 0 0 1 12.500 7" fill="none" stroke="#ddd" stroke-width="1.200"/><path d="M10 12.500a3 3 0 0 1 3-2.500v2.500z" fill="#fff"/></svg>
      <svg class="t vol" viewBox="0 0 17 14"><path d="M1 5h2.500L7 2v10L3.500 9H1z" fill="none" stroke="#fff" stroke-width="1.100"/><path d="M9 5q1.500 2 0 4M11.500 3.500q2.500 3.500 0 7M14 2q4 5 0 10" fill="none" stroke="#fff" stroke-width="1.100"/></svg>
      <div class="clock"><span>7:36 AM</span><span>7/27/2023</span></div>
      <div class="notif"><svg viewBox="0 0 18 16"><path d="M0 0h18v12H8l-4 4v-4H0z" fill="#fff"/><path d="M2.500 3h13M2.500 5.800h13M2.500 8.600h13" stroke="#111827"/></svg><b>4</b></div>
    </div>
  </footer>
</div>
</body>
</html>
```
FILE: styles.css
```css
* { box-sizing: border-box; }
body { margin: 0; background: #fafafa; font-family: "Open Sans", "Noto Sans", sans-serif; color: #333; overflow: hidden; }
svg { display: block; flex: none; }
.defs { position: absolute; }
i, em { font-style: normal; }
.screen { width: 1920px; height: 1080px; display: flex; flex-direction: column; overflow: hidden; }

/* browser tab strip */
.tabstrip { height: 34px; flex: none; background: #000; display: flex; color: #fff; }
.pinned { display: flex; padding-left: 8px; width: 437px; }
.pin { width: 39px; flex: none; display: flex; align-items: center; justify-content: center; background: linear-gradient(#555, #555) right center / 1px 20px no-repeat; }
.pin.last { background: none; }
.pin svg { width: 16px; height: 16px; }
.grab { width: 16px; height: 16px; border-radius: 2px; background: #00b14f; font: bold 6px/15px "Liberation Sans", sans-serif; text-align: center; }
.tab-active { width: 43px; background: #353535; border-radius: 8px 8px 0 0; display: flex; align-items: center; padding-left: 8px; gap: 8px; }
.tab-active b { font: 12px "Open Sans", sans-serif; width: 6px; overflow: hidden; }
.tab-active svg { width: 9px; height: 9px; }
.tabs { display: flex; }
.tab { width: 41.820px; flex: none; display: flex; align-items: center; gap: 8px; padding-left: 7px; background: linear-gradient(#555, #555) right center / 1px 20px no-repeat; }
.tab svg { width: 16px; height: 16px; }
.tab i { font-size: 12px; line-height: 16px; width: 3px; overflow: hidden; margin-left: 1px; }
.cp { width: 16px; font: italic bold 13px/16px "DejaVu Sans Condensed", "DejaVu Sans", sans-serif; color: #ff6c2c; letter-spacing: -1.300px; -webkit-text-stroke: .5px #ff6c2c; }
.pma { width: 16px; font: bold 7px/5px "Liberation Sans", sans-serif; color: #9a9aa8; letter-spacing: -.2px; }
.pma svg { height: 11px; }
.plus { width: 13px; height: 13px; margin: 10px 0 0 15px; }
.winctl { margin: 8px 17px 0 auto; display: flex; gap: 34px; }
.winctl svg { width: 12px; height: 12px; }

/* browser toolbar */
.toolbar { height: 37px; flex: none; background: #353535; border-bottom: 1px solid #626065; display: flex; align-items: center; padding-left: 14px; }
.nav { width: 16px; height: 16px; margin-right: 16px; }
.omnibox { width: 1266px; height: 28px; border-radius: 14px; background: #202124; margin-left: -2px; padding: 0 10px 0 14px; display: flex; align-items: center; }
.lock { width: 9px; height: 12px; }
.url { margin-left: 11px; font: 14px/20px "Open Sans", sans-serif; color: #9aa0a6; flex: 1; white-space: nowrap; letter-spacing: -.36px; }
.url b { color: #fff; font-weight: 400; letter-spacing: -.6px; }
.act { width: 16px; height: 16px; margin-left: 16px; }
.ext { display: flex; margin-left: 6px; }
.ext span { width: 32px; display: flex; justify-content: center; align-items: center; }
.ext svg { width: 16px; height: 16px; }
.avatar { width: 22px; height: 22px; border-radius: 50%; background: #ece8f8; }
.update { margin-left: 2px; width: 82px; height: 28px; border: 1px solid #f5aaa4; border-radius: 14px; background: #463c3c; color: #f5aaa4; font-size: 12px; display: flex; align-items: center; justify-content: space-between; padding: 0 10px 0 12px; letter-spacing: -.4px; }
.update svg { width: 4px; height: 14px; }

/* page */
.page { flex: 1; min-height: 0; display: flex; }
.sidebar { width: 284px; flex: none; background: #08193e; padding: 32px 24px; color: #d8dbe2; }
.logo { width: 118px; height: 27px; }
.logo text { font: italic bold 32px "DejaVu Sans", sans-serif; fill: #fff; stroke: #fff; stroke-width: 1.500; stroke-linejoin: round; }
.navitem { margin: 0; font: 16px/32px Roboto, sans-serif; letter-spacing: .1px; }
.navitem svg { display: inline-block; }
.tools { margin-top: 33px; padding-left: 3px; }
.tools svg { width: 18px; height: 18px; vertical-align: -3px; margin-right: 11px; }
.wp { margin-top: 14px; }
.wp svg { width: 24px; height: 24px; vertical-align: -7px; margin: 0 9px 0 1px; }

.main { flex: 1; min-width: 0; background: #fafafa; position: relative; overflow: hidden; }
.topbar { height: 60px; background: #fff; box-shadow: 0 1px 4px rgba(0,0,0,.13); display: flex; justify-content: flex-end; padding: 14px 32px 0 0; gap: 16px; }
.toolsearch { width: 384px; height: 32px; border: 1px solid #aab6cf; border-radius: 4px; padding: 0 8px; display: flex; align-items: center; justify-content: space-between; font: 16px "Liberation Sans", sans-serif; color: #757575; }
.toolsearch span { margin-top: -1px; }
.toolsearch svg { width: 15px; height: 15px; }
.round { width: 32px; height: 32px; border: 1px solid #0b1f47; border-radius: 50%; background: #ebedfc; display: flex; align-items: center; justify-content: center; }
.round svg { width: 12px; height: 14px; }

.content { margin-left: 24px; width: 1320px; font-size: 14px; }
h1 { font-size: 36px; font-weight: 300; line-height: 40px; margin: 24px 0 0; }
h2 { font-size: 24px; font-weight: 400; line-height: 26px; margin: 49px 0 0; height: 36px; border-bottom: 1px solid #eee; }
h2.second { margin-top: 28px; height: 37px; }
.desc { margin: 10px 0 0; line-height: 18px; }
.desc em { font-style: italic; }
.desc a { color: #428bca; text-decoration: underline; }
.current { margin: 28px 0 0 30px; font-size: 18px; font-weight: 700; line-height: 24px; color: #555; letter-spacing: -.02px; }
.applyrow { display: flex; justify-content: flex-end; gap: 4px; margin-top: 30px; }
.applyrow strong { font-weight: 600; line-height: 30px; }
.select { height: 34px; border: 1px solid #ccc; border-radius: 4px; background: #fff; box-shadow: inset 0 1px 1px rgba(0,0,0,.075); display: flex; justify-content: space-between; align-items: center; color: #555; padding-right: 4px; }
.select svg { width: 10px; height: 7px; }
.select span { padding-top: 1px; }
.ver { width: 200px; padding-left: 16px; }
.apply { width: 62px; height: 34px; background: #7badde; border: 1px solid #76a3d2; border-radius: 2px; color: #fff; font: 600 14px "Open Sans", sans-serif; padding: 0 0 1px; }
.filterrow { display: flex; justify-content: space-between; margin-top: 16px; }
.search { width: 645px; height: 34px; border: 1px solid #ccc; border-radius: 3px; background: #fff; box-shadow: inset 0 1px 1px rgba(0,0,0,.075); display: flex; justify-content: space-between; }
.search span { padding-left: 12px; line-height: 32px; color: #999; }
.search b { width: 39px; background: #eee; border-left: 1px solid #ccc; display: flex; align-items: center; justify-content: center; }
.search svg { width: 14px; height: 14px; }
.paging { display: flex; gap: 4px; line-height: 35px; }
.size { width: 65px; padding-left: 7px; }
.pager { display: flex; height: 34px; width: 149px; border: 1px solid #ddd; border-radius: 4px; background: #fff; color: #428bca; line-height: 32px; text-align: center; }
.pager i { width: 33px; border-left: 1px solid #ddd; }
.pager .w { width: 40px; flex: 1; }
.pager i:first-child { border-left: 0; }
.pager .off { color: #999; }
.inforow { display: flex; justify-content: space-between; font-size: 12px; line-height: 18px; margin-top: 20px; }
.inforow strong { font-weight: 600; }
.sel { letter-spacing: .1px; }
.count { display: inline-block; width: 21px; height: 18px; border-radius: 9px; background: #2780bb; color: #fff; text-align: center; line-height: 18px; }
.grid { display: grid; grid-template-columns: 142.500px 553px 468px 1fr; }
.thead { height: 54px; border-bottom: 2px solid #333; color: #428bca; padding-top: 8px; line-height: 36px; }
.checkdrop { display: flex; align-items: flex-start; }
.cbx { width: 31px; height: 36px; border: 1px solid #ccc; border-radius: 2px; display: flex; align-items: center; justify-content: center; }
.drop { width: 25px; height: 34px; border: 1px solid #ccc; border-left: 0; border-radius: 2px; background: #fff; display: flex; align-items: center; justify-content: center; }
.caret { border: 4px solid transparent; border-top-color: #333; border-bottom: 0; }
.check { width: 13px; height: 13px; border: 1px solid #767676; border-radius: 2.500px; background: #fff; display: block; }
.up { display: inline-block; margin-left: 2px; border: 5px solid transparent; border-bottom: 10px solid #428bca; border-top: 0; }
.row { height: 39.150px; border-bottom: 1px solid #ddd; line-height: 38px; align-items: center; }
.row:nth-child(odd) { background: #f0f0f0; }
.row:nth-child(even) { background: #f9f9f9; }
.row .check { margin-left: 8px; }
.v.inh { display: flex; gap: 4px; align-items: center; margin-top: -2px; }
.tag { height: 22px; width: 78px; margin-top: 3px; border: 1px solid #ccc; border-radius: 2px; background: #eee; box-shadow: 0 2px 4px rgba(0,0,0,.22); font-size: 12px; line-height: 20px; display: flex; align-items: center; gap: 3px; padding-left: 5px; }
.tag svg { width: 12px; height: 12px; }
.tag.only { margin-left: 129px; }
.ban { width: 18px; height: 18px; margin-top: -3px; }
.edgeclip { position: absolute; right: 0; top: 620px; width: 40px; height: 349px; overflow: hidden; }
.edgeshade { position: absolute; left: 40px; top: 60px; width: 60px; height: 230px; box-shadow: 0 0 25px rgba(0,0,0,.18); }
.stats { position: absolute; right: 0; top: 714px; width: 30px; height: 30px; background: #293a4a; border-radius: 4px 0 0 4px; display: flex; align-items: center; justify-content: center; }
.stats svg { width: 13px; height: 12px; }

.scrollbar { width: 17px; flex: none; background: #f1f1f1; display: flex; flex-direction: column; align-items: center; }
.thumb { width: 13px; height: 815px; background: #c1c1c1; }
.arr { border: 4px solid transparent; }
.arr.top { margin: 7px 0 6px; border-bottom-color: #a3a3a3; border-top: 0; }
.arr.down { margin-top: auto; margin-bottom: 7px; border-top-color: #505050; border-bottom: 0; }

/* taskbar */
.taskbar { height: 40px; flex: none; background: linear-gradient(90deg, #001a22, #02101c 50%, #020a1c); display: flex; color: #fff; }
.start { width: 48px; display: flex; align-items: center; justify-content: center; }
.winsearch { width: 288px; background: #f2f2f2; border: 1px solid #bbb; color: #333; display: flex; align-items: center; padding-left: 11px; gap: 12px; font-size: 15px; letter-spacing: -.42px; }
.winsearch svg { width: 16px; height: 16px; }
.taskview { width: 50px; padding-right: 2px; display: flex; align-items: center; justify-content: center; }
.taskview svg { width: 17px; height: 16px; }
.apps { display: flex; }
.app { width: 49px; flex: none; display: flex; justify-content: center; align-items: center; }
.app svg { width: 24px; height: 24px; }
.run { background: linear-gradient(#76b9ed, #76b9ed) center bottom / 40px 2px no-repeat; }
.full { background: #354750; border-bottom: 2px solid #76b9ed; padding-top: 2px; }
.soft { background: #1d2a35; }
.tray { flex: 1; display: flex; align-items: center; white-space: nowrap; font-size: 15px; letter-spacing: -.55px; }
.help { width: 24px; height: 24px; margin-left: 81px; }
.weather { width: 25px; height: 22px; margin-left: 36px; }
.temp { margin-left: 7px; width: 39px; }
.cond { width: 107px; font-size: 14.500px; letter-spacing: -.5px; }
.t { margin-right: 8px; }
.chev { width: 13px; height: 8px; margin: 0 12px 0 3px; }
.batt { width: 16px; height: 14px; }
.cloud { width: 16px; height: 10px; }
.wifi { width: 14px; height: 14px; margin-left: 2px; }
.vol { width: 17px; height: 14px; }
.clock { width: 62px; text-align: center; font-size: 12px; line-height: 18px; display: flex; flex-direction: column; letter-spacing: -.4px; }
.notif { margin-left: 12px; width: 28px; height: 26px; position: relative; }
.notif svg { width: 18px; height: 16px; margin-top: 2px; }
.notif b { position: absolute; left: 8px; top: 8px; width: 17px; height: 17px; border-radius: 50%; border: 1px solid #888; background: #2b2f38; font-size: 11px; line-height: 15px; text-align: center; letter-spacing: 0; }
```
